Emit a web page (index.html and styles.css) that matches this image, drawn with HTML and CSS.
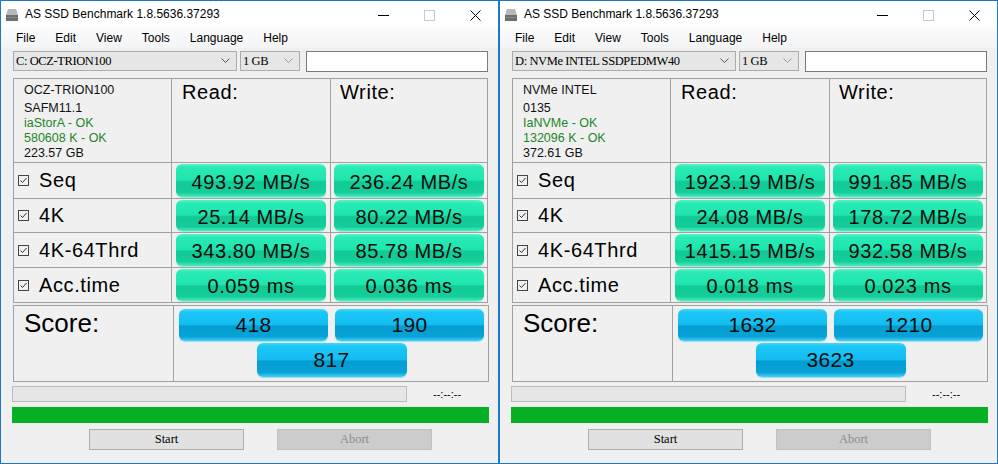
FILE: index.html
```html
<!DOCTYPE html>
<html>
<head>
<meta charset="utf-8">
<title>AS SSD Benchmark</title>
<link rel="stylesheet" href="styles.css">
</head>
<body>
<div class="desk">

  <div class="win">
    <div class="titlebar">
      <svg class="app-icon" width="12" height="13" viewBox="0 0 12 13"><path d="M2 1h8l2 6H0z" fill="#b8b8b8"/><rect x="0" y="7" width="12" height="6" fill="#6e6e6e"/><rect x="1" y="9" width="10" height="1" fill="#8a8a8a"/></svg>
      <span class="title">AS SSD Benchmark 1.8.5636.37293</span>
      <div class="caps">
        <div class="cap"><svg width="11" height="11" viewBox="0 0 11 11"><path d="M0 5.5h11" stroke="#000" stroke-width="1"/></svg></div>
        <div class="cap"><svg width="11" height="11" viewBox="0 0 11 11"><rect x="0.5" y="0.5" width="10" height="10" fill="none" stroke="#c8c8c8"/></svg></div>
        <div class="cap"><svg width="11" height="11" viewBox="0 0 11 11"><path d="M0.5 0.5l10 10M10.5 0.5l-10 10" stroke="#000" stroke-width="1"/></svg></div>
      </div>
    </div>
    <div class="menubar">
      <span>File</span><span>Edit</span><span>View</span><span>Tools</span><span>Language</span><span>Help</span>
    </div>
    <div class="controls">
      <div class="combo drive"><span>C: OCZ-TRION100</span><svg class="chev" width="9" height="6" viewBox="0 0 9 6"><path d="M0.5 0.5l4 4 4-4" fill="none" stroke="#555"/></svg></div>
      <div class="combo size"><span>1 GB</span><svg class="chev light" width="9" height="6" viewBox="0 0 9 6"><path d="M0.5 0.5l4 4 4-4" fill="none" stroke="#9a9a9a"/></svg></div>
      <div class="textbox"></div>
    </div>
    <div class="results">
      <div class="cell info">
        <div class="l1">OCZ-TRION100</div>
        <div class="ln">SAFM11.1</div>
        <div class="ln ok">iaStorA - OK</div>
        <div class="ln ok">580608 K - OK</div>
        <div class="ln">223.57 GB</div>
      </div>
      <div class="cell hdr">Read:</div>
      <div class="cell hdr w">Write:</div>

      <div class="cell label"><svg class="chk" width="11" height="11" viewBox="0 0 11 11"><rect x="0.5" y="0.5" width="10" height="10" fill="none" stroke="#444"/><path d="M2.5 5.5l2 2 4-4.5" fill="none" stroke="#333"/></svg>Seq</div>
      <div class="cell val"><div class="bar">493.92 MB/s</div></div>
      <div class="cell val"><div class="bar">236.24 MB/s</div></div>

      <div class="cell label"><svg class="chk" width="11" height="11" viewBox="0 0 11 11"><rect x="0.5" y="0.5" width="10" height="10" fill="none" stroke="#444"/><path d="M2.5 5.5l2 2 4-4.5" fill="none" stroke="#333"/></svg>4K</div>
      <div class="cell val"><div class="bar">25.14 MB/s</div></div>
      <div class="cell val"><div class="bar">80.22 MB/s</div></div>

      <div class="cell label"><svg class="chk" width="11" height="11" viewBox="0 0 11 11"><rect x="0.5" y="0.5" width="10" height="10" fill="none" stroke="#444"/><path d="M2.5 5.5l2 2 4-4.5" fill="none" stroke="#333"/></svg>4K-64Thrd</div>
      <div class="cell val"><div class="bar">343.80 MB/s</div></div>
      <div class="cell val"><div class="bar">85.78 MB/s</div></div>

      <div class="cell label"><svg class="chk" width="11" height="11" viewBox="0 0 11 11"><rect x="0.5" y="0.5" width="10" height="10" fill="none" stroke="#444"/><path d="M2.5 5.5l2 2 4-4.5" fill="none" stroke="#333"/></svg>Acc.time</div>
      <div class="cell val"><div class="bar">0.059 ms</div></div>
      <div class="cell val"><div class="bar">0.036 ms</div></div>
    </div>
    <div class="scorebox">
      <div class="cell scorelabel">Score:</div>
      <div class="cell scores">
        <div class="srow"><div class="sbar">418</div><div class="sbar">190</div></div>
        <div class="srow total"><div class="sbar big">817</div></div>
      </div>
    </div>
    <div class="progrow"><div class="progress"></div><span class="timer">--:--:--</span></div>
    <div class="greenbar"></div>
    <div class="buttons"><div class="btn">Start</div><div class="btn off">Abort</div></div>
  </div>

  <div class="win">
    <div class="titlebar">
      <svg class="app-icon" width="12" height="13" viewBox="0 0 12 13"><path d="M2 1h8l2 6H0z" fill="#b8b8b8"/><rect x="0" y="7" width="12" height="6" fill="#6e6e6e"/><rect x="1" y="9" width="10" height="1" fill="#8a8a8a"/></svg>
      <span class="title">AS SSD Benchmark 1.8.5636.37293</span>
      <div class="caps">
        <div class="cap"><svg width="11" height="11" viewBox="0 0 11 11"><path d="M0 5.5h11" stroke="#000" stroke-width="1"/></svg></div>
        <div class="cap"><svg width="11" height="11" viewBox="0 0 11 11"><rect x="0.5" y="0.5" width="10" height="10" fill="none" stroke="#c8c8c8"/></svg></div>
        <div class="cap"><svg width="11" height="11" viewBox="0 0 11 11"><path d="M0.5 0.5l10 10M10.5 0.5l-10 10" stroke="#000" stroke-width="1"/></svg></div>
      </div>
    </div>
    <div class="menubar">
      <span>File</span><span>Edit</span><span>View</span><span>Tools</span><span>Language</span><span>Help</span>
    </div>
    <div class="controls">
      <div class="combo drive"><span>D: NVMe INTEL SSDPEDMW40</span><svg class="chev" width="9" height="6" viewBox="0 0 9 6"><path d="M0.5 0.5l4 4 4-4" fill="none" stroke="#555"/></svg></div>
      <div class="combo size"><span>1 GB</span><svg class="chev light" width="9" height="6" viewBox="0 0 9 6"><path d="M0.5 0.5l4 4 4-4" fill="none" stroke="#9a9a9a"/></svg></div>
      <div class="textbox"></div>
    </div>
    <div class="results">
      <div class="cell info">
        <div class="l1">NVMe INTEL</div>
        <div class="ln">0135</div>
        <div class="ln ok">IaNVMe - OK</div>
        <div class="ln ok">132096 K - OK</div>
        <div class="ln">372.61 GB</div>
      </div>
      <div class="cell hdr">Read:</div>
      <div class="cell hdr w">Write:</div>

      <div class="cell label"><svg class="chk" width="11" height="11" viewBox="0 0 11 11"><rect x="0.5" y="0.5" width="10" height="10" fill="none" stroke="#444"/><path d="M2.5 5.5l2 2 4-4.5" fill="none" stroke="#333"/></svg>Seq</div>
      <div class="cell val"><div class="bar">1923.19 MB/s</div></div>
      <div class="cell val"><div class="bar">991.85 MB/s</div></div>

      <div class="cell label"><svg class="chk" width="11" height="11" viewBox="0 0 11 11"><rect x="0.5" y="0.5" width="10" height="10" fill="none" stroke="#444"/><path d="M2.5 5.5l2 2 4-4.5" fill="none" stroke="#333"/></svg>4K</div>
      <div class="cell val"><div class="bar">24.08 MB/s</div></div>
      <div class="cell val"><div class="bar">178.72 MB/s</div></div>

      <div class="cell label"><svg class="chk" width="11" height="11" viewBox="0 0 11 11"><rect x="0.5" y="0.5" width="10" height="10" fill="none" stroke="#444"/><path d="M2.5 5.5l2 2 4-4.5" fill="none" stroke="#333"/></svg>4K-64Thrd</div>
      <div class="cell val"><div class="bar">1415.15 MB/s</div></div>
      <div class="cell val"><div class="bar">932.58 MB/s</div></div>

      <div class="cell label"><svg class="chk" width="11" height="11" viewBox="0 0 11 11"><rect x="0.5" y="0.5" width="10" height="10" fill="none" stroke="#444"/><path d="M2.5 5.5l2 2 4-4.5" fill="none" stroke="#333"/></svg>Acc.time</div>
      <div class="cell val"><div class="bar">0.018 ms</div></div>
      <div class="cell val"><div class="bar">0.023 ms</div></div>
    </div>
    <div class="scorebox">
      <div class="cell scorelabel">Score:</div>
      <div class="cell scores">
        <div class="srow"><div class="sbar">1632</div><div class="sbar">1210</div></div>
        <div class="srow total"><div class="sbar big">3623</div></div>
      </div>
    </div>
    <div class="progrow"><div class="progress"></div><span class="timer">--:--:--</span></div>
    <div class="greenbar"></div>
    <div class="buttons"><div class="btn">Start</div><div class="btn off">Abort</div></div>
  </div>

</div>
</body>
</html>
```
FILE: styles.css
```css
* { box-sizing: border-box; }

body {
  margin: 0;
  background: #f0f0f0;
  font-family: "Liberation Sans", Arial, sans-serif;
  color: #000;
}

.desk {
  display: flex;
  width: 998px;
  height: 464px;
}

.win {
  width: 499px;
  height: 464px;
  border: 1px solid #1979ca;
  background: #f0f0f0;
  display: flex;
  flex-direction: column;
  overflow: hidden;
}

/* title bar */
.titlebar {
  height: 26px;
  flex: none;
  background: #fff;
  display: flex;
  align-items: center;
}
.app-icon { margin-left: 5px; flex: none; }
.title {
  margin-left: 7px;
  font-size: 12px;
  line-height: 14px;
  padding-bottom: 1px;
}
.caps {
  margin-left: auto;
  display: flex;
  height: 100%;
}
.cap {
  width: 46px;
  height: 100%;
  display: flex;
  align-items: center;
  justify-content: center;
  padding-top: 2px;
}

/* menu */
.menubar {
  height: 21px;
  flex: none;
  display: flex;
  align-items: center;
  gap: 20px;
  padding-left: 15px;
  font-size: 12px;
  background: linear-gradient(to bottom, #fbfbfc, #f3f4f5);
}

/* combos */
.controls {
  margin: 3px 0 0 12px;
  display: flex;
  align-items: flex-start;
  height: 21px;
  flex: none;
}
.combo {
  height: 20px;
  background: #e6e6e6;
  border: 1px solid #acacac;
  display: flex;
  align-items: center;
  font-family: "Liberation Serif", "Times New Roman", serif;
  font-size: 12.5px;
  letter-spacing: -0.4px;
  padding-left: 2px;
}
.combo span { flex: 1; white-space: nowrap; }
.chev { margin-right: 6px; flex: none; }
.drive { width: 224px; }
.size { width: 60px; margin-left: 3px; }
.textbox {
  width: 182px;
  height: 21px;
  margin-left: 6px;
  background: #fff;
  border: 1px solid #7a7a7a;
}

/* results table */
.results {
  margin: 6px 0 0 12px;
  width: 475px;
  flex: none;
  display: grid;
  grid-template-columns: 157px 158px 156px;
  grid-template-rows: 83px 35px 33px 34px 34px;
  gap: 1px;
  padding: 1px;
  background: #a0a0a0;
}
.cell { background: #f0f0f0; }

.info {
  padding: 3px 0 0 10px;
  font-size: 12.5px;
  color: #111;
}
.info .l1 { line-height: 16px; }
.info .ln { line-height: 15px; }
.info .l1 + .ln { margin-top: 2.5px; }
.info .ok { color: #24862a; }

.hdr {
  font-size: 20px;
  letter-spacing: 0.6px;
  line-height: 23px;
  padding: 2px 0 0 10px;
}
.hdr.w { padding-left: 9px; }

.label {
  display: flex;
  align-items: center;
  padding-left: 4px;
  font-size: 20px;
  letter-spacing: 0.6px;
}
.chk { margin-right: 10px; flex: none; }

.val {
  display: flex;
  justify-content: center;
  padding: 1px 0;
}
.bar {
  width: 150px;
  border-radius: 6px;
  display: flex;
  align-items: center;
  justify-content: center;
  padding-top: 3px;
  font-size: 20px;
  letter-spacing: 0.6px;
  color: #0c0c0c;
  background: linear-gradient(to bottom,
    #5af3c9 0%, #2aeab5 10%, #1ee5ae 48%,
    #12c994 54%, #14ce99 86%, #4ceac0 100%);
  box-shadow: 0 1px 1px rgba(120, 235, 205, 0.7);
}

/* score */
.scorebox {
  margin: 2px 0 0 12px;
  width: 476px;
  height: 77px;
  flex: none;
  display: grid;
  grid-template-columns: 159px 314px;
  gap: 1px;
  padding: 1px;
  background: #a0a0a0;
}
.scorelabel {
  font-size: 26px;
  line-height: 30px;
  padding: 2px 0 0 10px;
}
.scores {
  padding: 3px 4px 0 5px;
  display: flex;
  flex-direction: column;
  gap: 2px;
}
.srow { display: flex; gap: 7px; }
.srow.total { justify-content: center; }
.sbar {
  width: 149px;
  height: 32px;
  border-radius: 6px;
  display: flex;
  align-items: center;
  justify-content: center;
  font-size: 21px;
  letter-spacing: 0.3px;
  color: #0c0c0c;
  background: linear-gradient(to bottom,
    #45d6fb 0%, #1cc7f7 10%, #14bdf1 48%,
    #049dd2 54%, #07a2d6 86%, #45cff5 100%);
  box-shadow: 0 1px 1px rgba(120, 215, 245, 0.7);
}
.sbar.big { width: 150px; height: 34px; }

/* progress */
.progrow {
  margin: 4px 0 0 11px;
  display: flex;
  align-items: center;
  flex: none;
}
.progress {
  width: 395px;
  height: 16px;
  background: #e6e6e6;
  border: 1px solid #bcbcbc;
}
.timer {
  margin-left: 26px;
  font-size: 11px;
}
.greenbar {
  margin: 5px 0 0 11px;
  width: 477px;
  height: 16px;
  flex: none;
  background: #06b025;
}

.buttons {
  margin: 6px 0 0 88px;
  display: flex;
  gap: 33px;
  flex: none;
}
.btn {
  width: 155px;
  height: 21px;
  background: #e1e1e1;
  border: 1px solid #adadad;
  display: flex;
  align-items: center;
  justify-content: center;
  font-family: "Liberation Serif", "Times New Roman", serif;
  font-size: 12.5px;
}
.btn.off {
  background: #cccccc;
  border-color: #bfbfbf;
  color: #8d8d8d;
}
```
